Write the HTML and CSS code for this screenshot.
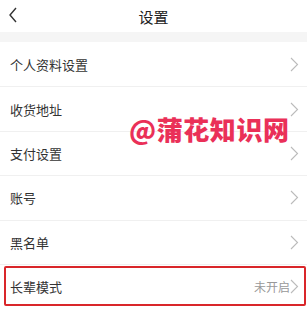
FILE: index.html
```html
<!DOCTYPE html>
<html lang="zh">
<head>
<meta charset="utf-8">
<link rel="stylesheet" href="styles.css">
</head>
<body>
<div class="page">
  <header class="topbar">
    <svg class="back" width="10" height="16" viewBox="0 0 10 16"><path d="M8 1 L2 8 L8 15" fill="none" stroke="#333" stroke-width="1.4"/></svg>
    <h1 class="title">设置</h1>
  </header>
  <div class="band"></div>
  <ul class="list">
    <li class="row"><span class="label">个人资料设置</span><span class="right"><svg class="chev" width="9" height="15" viewBox="0 0 9 15"><path d="M1 1 L7.5 7.5 L1 14" fill="none" stroke="#bbb" stroke-width="1.1"/></svg></span></li>
    <li class="row"><span class="label">收货地址</span><span class="right"><svg class="chev" width="9" height="15" viewBox="0 0 9 15"><path d="M1 1 L7.5 7.5 L1 14" fill="none" stroke="#bbb" stroke-width="1.1"/></svg></span></li>
    <li class="row"><span class="label">支付设置</span><span class="right"><svg class="chev" width="9" height="15" viewBox="0 0 9 15"><path d="M1 1 L7.5 7.5 L1 14" fill="none" stroke="#bbb" stroke-width="1.1"/></svg></span></li>
    <li class="row"><span class="label">账号</span><span class="right"><svg class="chev" width="9" height="15" viewBox="0 0 9 15"><path d="M1 1 L7.5 7.5 L1 14" fill="none" stroke="#bbb" stroke-width="1.1"/></svg></span></li>
    <li class="row"><span class="label">黑名单</span><span class="right"><svg class="chev" width="9" height="15" viewBox="0 0 9 15"><path d="M1 1 L7.5 7.5 L1 14" fill="none" stroke="#bbb" stroke-width="1.1"/></svg></span></li>
    <li class="row highlight"><span class="label">长辈模式</span><span class="right"><span class="status">未开启</span><svg class="chev" width="9" height="15" viewBox="0 0 9 15"><path d="M1 1 L7.5 7.5 L1 14" fill="none" stroke="#bbb" stroke-width="1.1"/></svg></span></li>
  </ul>
  <div class="watermark">@蒲花知识网</div>
</div>
</body>
</html>
```
FILE: styles.css
```css
* { box-sizing: border-box; }
html, body { margin: 0; padding: 0; background: #fff; }
body { font-family: "Noto Sans CJK SC", "Noto Sans", sans-serif; color: #333; }
.page { position: relative; width: 307px; height: 309px; overflow: hidden; }
.topbar { height: 32px; display: flex; align-items: center; justify-content: center; position: relative; background: #fff; }
.back { position: absolute; left: 8px; top: 7px; }
.title { margin: 0; font-size: 15px; font-weight: 400; color: #222; line-height: 1; }
.band { height: 10px; background: #f5f5f5; }
.list { list-style: none; margin: 0; padding: 0; }
.row { height: 44.4px; display: flex; align-items: center; justify-content: space-between; padding: 0 8px 0 10px; border-top: 1px solid #f0f0f0; position: relative; }
.row:first-child { border-top: none; }
.label { font-size: 13px; color: #333; }
.right { display: flex; align-items: center; }
.status { font-size: 12px; color: #999; margin-right: 0; }
.highlight::after { content: ""; position: absolute; left: 4px; right: 1px; top: 1px; bottom: 2px; border: 2px solid #d9262a; border-radius: 2px; }
.watermark { position: absolute; left: 129px; top: 113px; font-size: 26px; font-weight: 900; color: #ea3058; letter-spacing: 0.6px; line-height: 1.2; }
```
